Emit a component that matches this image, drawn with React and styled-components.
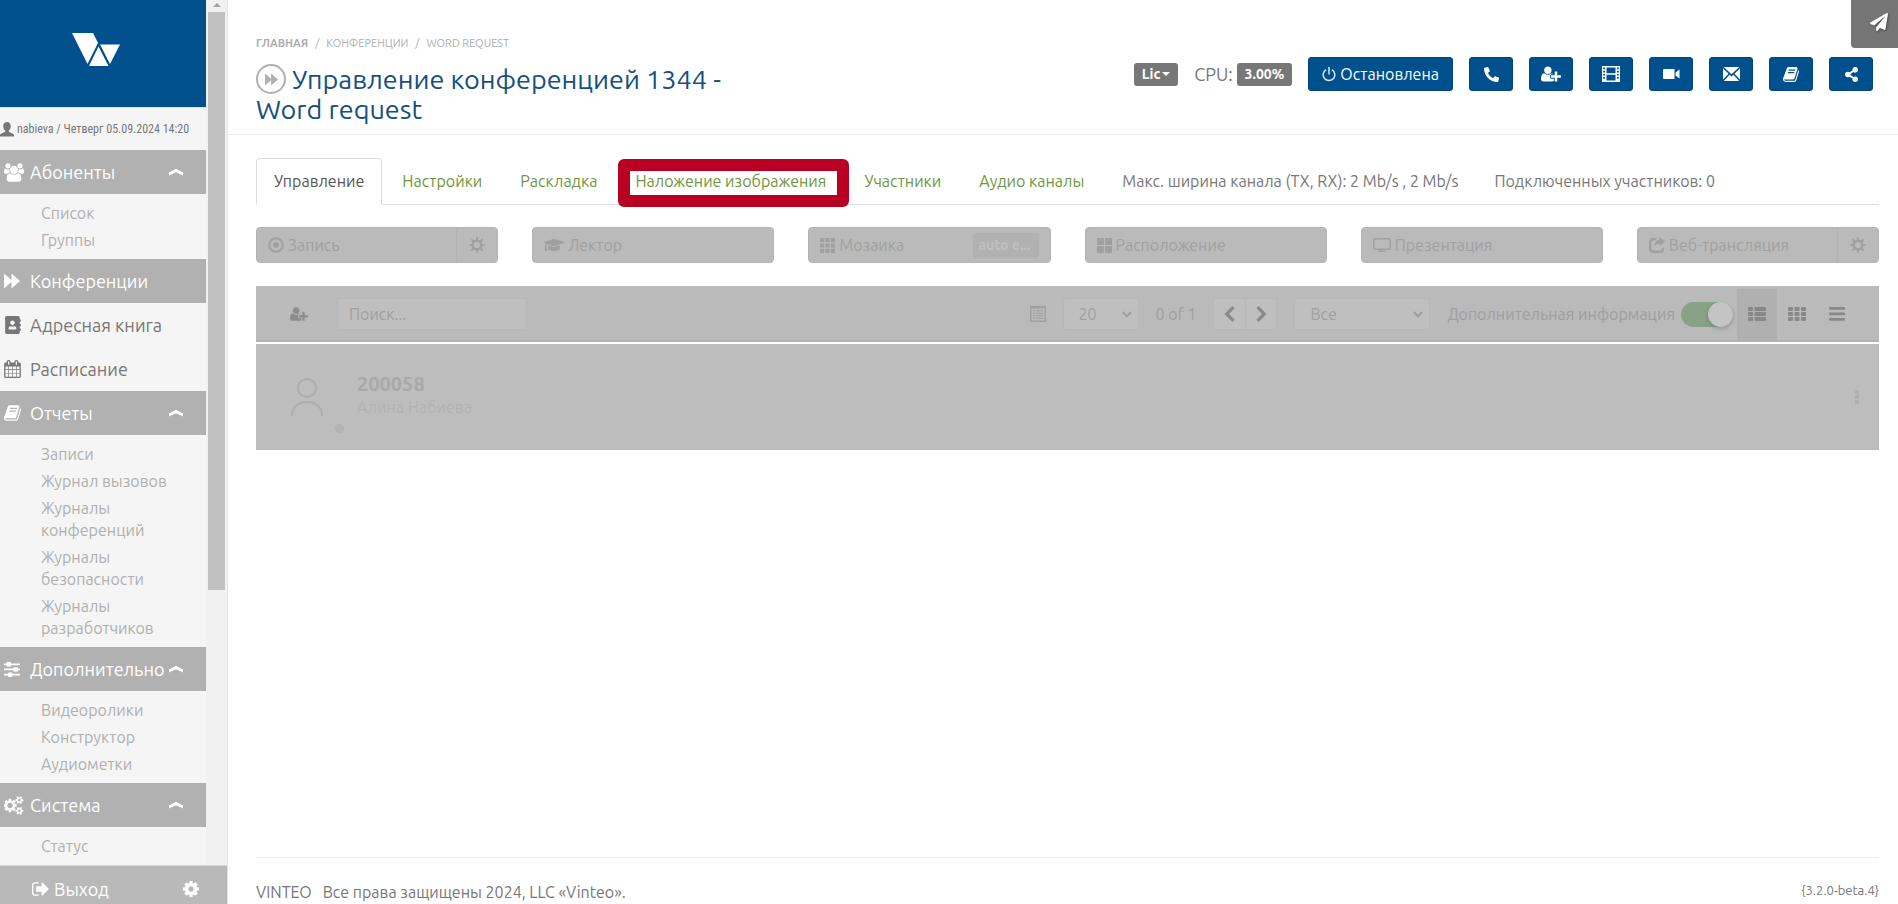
import { useState } from "react";
import styled, { createGlobalStyle } from "styled-components";
import { FaAddressBook, FaGraduationCap, FaPaperPlane, FaPhoneAlt, FaShareAlt } from "react-icons/fa";

const GlobalStyle = createGlobalStyle`
    *, *::before, *::after {
        box-sizing: border-box;
    }

    body {
        margin: 0;
        background: #fff;
        color: #777;
        font-family: "Ubuntu", "Noto Sans", sans-serif;
        font-size: 16px;
        line-height: 22px;
    }

    button, input, select {
        font: inherit;
        color: inherit;
    }

    a {
        color: inherit;
        text-decoration: none;
    }

    svg {
        display: block;
        flex: none;
    }
`;

/* ---------- icons ---------- */

const Svg = ({ box, w, h, children }) => (
    <svg viewBox={box} width={w} height={h} fill="currentColor" aria-hidden="true">{children}</svg>
);

const LogoMark = () => (
    <Svg box="0 0 48 34" w={48} h={34}>
        <path d="M0 0h21l5 10-10.500 21z" />
        <path d="M28 11.500h20L38 31z" />
        <path d="M26.500 13.500 36.500 33H17z" />
    </Svg>
);

const PersonIcon = () => (
    <Svg box="0 0 14 15" w={14} h={15}>
        <path d="M7 0c2.400 0 3.800 1.700 3.800 4.200 0 1.800-.8 3.300-1.900 4.300v1.300l4 1.900c.7.300 1.100.8 1.100 1.500V14.500H0v-1.300c0-.7.400-1.200 1.100-1.500l4-1.900V8.500C4 7.500 3.200 6 3.200 4.200 3.200 1.700 4.600 0 7 0z" />
    </Svg>
);

const UsersIcon = () => (
    <Svg box="0 0 1920 1792" w={20} h={19}>
        <path d="M593 896q-162 5-265 128h-134q-82 0-138-40.500t-56-118.500q0-353 124-353 6 0 43.500 21t97.500 42.500 119 21.500q67 0 133-23-5 37-5 66 0 139 81 256zm1071 637q0 120-73 189.500t-194 69.500h-874q-121 0-194-69.500t-73-189.500q0-53 3.500-103.500t14-109 26.500-108.500 43-97.500 62-81 85.500-53.500 111.500-20q10 0 43 21.500t73 48 107 48 135 21.500 135-21.500 107-48 73-48 43-21.500q61 0 111.500 20t85.500 53.500 62 81 43 97.500 26.500 108.500 14 109 3.500 103.500zm-1024-1277q0 106-75 181t-181 75-181-75-75-181 75-181 181-75 181 75 75 181zm704 384q0 159-112.500 271.500t-271.500 112.500-271.500-112.500-112.500-271.500 112.500-271.500 271.500-112.500 271.500 112.500 112.500 271.500zm576 225q0 78-56 118.500t-138 40.500h-134q-103-123-265-128 81-117 81-256 0-29-5-66 66 23 133 23 59 0 119-21.500t97.500-42.500 43.500-21q124 0 124 353zm-128-609q0 106-75 181t-181 75-181-75-75-181 75-181 181-75 181 75 75 181z" />
    </Svg>
);

const ForwardIcon = ({ size = 16 }) => (
    <Svg box="0 0 16 16" w={size} h={size}>
        <path d="M0 .5 7.500 7V.5L16 8l-8.500 7.500V9L0 15.500z" />
    </Svg>
);

const CalendarIcon = () => (
    <Svg box="64 0 1664 1792" w={17} h={18}>
        <path d="M192 1664h288v-288h-288v288zm352 0h320v-288h-320v288zm-352-352h288v-320h-288v320zm352 0h320v-320h-320v320zm-352-384h288v-288h-288v288zm736 736h320v-288h-320v288zm-384-736h320v-288h-320v288zm768 736h288v-288h-288v288zm-384-352h320v-320h-320v320zm-352-864v-288q0-13-9.500-22.500t-22.500-9.500h-64q-13 0-22.500 9.500t-9.500 22.500v288q0 13 9.500 22.500t22.500 9.500h64q13 0 22.500-9.500t9.500-22.500zm736 864h288v-320h-288v320zm-384-384h320v-288h-320v288zm384 0h288v-288h-288v288zm32-480v-288q0-13-9.500-22.500t-22.500-9.500h-64q-13 0-22.500 9.500t-9.500 22.500v288q0 13 9.500 22.500t22.500 9.500h64q13 0 22.500-9.500t9.500-22.500zm384-64v1280q0 52-38 90t-90 38h-1408q-52 0-90-38t-38-90v-1280q0-52 38-90t90-38h128v-96q0-66 47-113t113-47h64q66 0 113 47t47 113v96h384v-96q0-66 47-113t113-47h64q66 0 113 47t47 113v96h128q52 0 90 38t38 90z" />
    </Svg>
);

const BookIcon = ({ size = 17 }) => (
    <Svg box="64 128 1664 1536" w={size} h={size - 1}>
        <path d="M1703 478q40 57 18 129l-275 906q-19 64-76.500 107.500t-122.500 43.500h-923q-77 0-148.500-53.500t-99.500-131.500q-24-67-2-127 0-4 3-27t4-37q1-8-3-21.500t-3-19.500q2-11 8-21t16.500-23.500 16.500-23.500q23-38 45-91.500t30-91.500q3-10 .5-30t-.5-28q3-11 17-28t17-23q21-36 42-92t25-90q1-9-2.500-32t.5-28q4-13 22-30.500t22-22.500q19-26 42.500-84.500t27.500-96.500q1-8-3-25.500t-2-26.500q2-8 9-18t18-23 17-21q8-12 16.500-30.500t15-35 16-36 19.500-32 26.500-23.500 36-11.500 47.500 5.500l-1 3q38-9 51-9h761q74 0 114 56t18 130l-274 906q-36 119-71.500 153.500t-128.500 34.500h-869q-27 0-38 15-11 16-1 43 24 70 144 70h923q29 0 56-15.500t35-41.500l300-987q7-22 5-57 38 15 59 43zm-1064 2q-4 13 2 22.500t20 9.500h608q13 0 25.500-9.500t16.500-22.500l21-64q4-13-2-22.500t-20-9.500h-608q-13 0-25.500 9.500t-16.500 22.500zm-83 256q-4 13 2 22.500t20 9.500h608q13 0 25.500-9.500t16.500-22.500l21-64q4-13-2-22.500t-20-9.500h-608q-13 0-25.500 9.500t-16.500 22.500z" />
    </Svg>
);

const SlidersIcon = () => (
    <Svg box="0 0 16 15" w={16} h={15}>
        <path d="M0 1.500h16v1.700H0zM0 6.600h16v1.700H0zM0 11.700h16v1.700H0z" />
        <rect x="2.500" y="0" width="4.500" height="4.500" rx=".8" />
        <rect x="9.500" y="5.200" width="4.500" height="4.500" rx=".8" />
        <rect x="4" y="10.400" width="4.500" height="4.500" rx=".8" />
    </Svg>
);

const CogsIcon = () => (
    <Svg box="0 0 1920 1792" w={20} h={19}>
        <path d="M832 896q0-106-75-181t-181-75-181 75-75 181 75 181 181 75 181-75 75-181zm768 512q0-52-38-90t-90-38-90 38-38 90q0 53 37.500 90.500t90.500 37.500 90.500-37.500 37.500-90.500zm0-1024q0-52-38-90t-90-38-90 38-38 90q0 53 37.500 90.500t90.500 37.500 90.500-37.500 37.500-90.500zm-384 421v185q0 10-7 19.500t-16 10.500l-155 24q-11 35-32 76 34 48 90 115 7 11 7 20 0 12-7 19-23 30-82.500 89.500t-78.500 59.500q-11 0-21-7l-115-90q-37 19-77 31-11 108-23 155-7 24-30 24h-186q-11 0-20-7.500t-10-17.500l-23-153q-34-10-75-31l-118 89q-7 7-20 7-11 0-21-8-144-133-144-160 0-9 7-19 10-14 41-53t47-61q-23-44-35-82l-152-24q-10-1-17-9.500t-7-19.500v-185q0-10 7-19.500t16-10.500l155-24q11-35 32-76-34-48-90-115-7-11-7-20 0-12 7-20 22-30 82-89t79-59q11 0 21 7l115 90q34-18 77-32 11-108 23-154 7-24 30-24h186q11 0 20 7.500t10 17.500l23 153q34 10 75 31l118-89q8-7 20-7 11 0 21 8 144 133 144 160 0 8-7 19-12 16-42 54t-45 60q23 48 34 82l152 23q10 2 17 10.500t7 19.500zm640 533v140q0 16-149 31-12 27-30 52 51 113 51 138 0 4-4 7-122 71-124 71-8 0-46-47t-52-68q-20 2-30 2t-30-2q-14 21-52 68t-46 47q-2 0-124-71-4-3-4-7 0-25 51-138-18-25-30-52-149-15-149-31v-140q0-16 149-31 13-29 30-52-51-113-51-138 0-4 4-7 4-2 35-20t59-34 30-16q8 0 46 46.500t52 67.500q20-2 30-2t30 2q51-71 92-112l6-2q4 0 124 70 4 3 4 7 0 25-51 138 17 23 30 52 149 15 149 31zm0-1024v140q0 16-149 31-12 27-30 52 51 113 51 138 0 4-4 7-122 71-124 71-8 0-46-47t-52-68q-20 2-30 2t-30-2q-14 21-52 68t-46 47q-2 0-124-71-4-3-4-7 0-25 51-138-18-25-30-52-149-15-149-31v-140q0-16 149-31 13-29 30-52-51-113-51-138 0-4 4-7 4-2 35-20t59-34 30-16q8 0 46 46.500t52 67.500q20-2 30-2t30 2q51-71 92-112l6-2q4 0 124 70 4 3 4 7 0 25-51 138 17 23 30 52 149 15 149 31z" />
    </Svg>
);

const CogIcon = () => (
    <Svg box="128 128 1536 1536" w={16} h={16}>
        <path d="M1152 896q0-106-75-181t-181-75-181 75-75 181 75 181 181 75 181-75 75-181zm512-109v222q0 12-8 23t-20 13l-185 28q-19 54-39 91 35 50 107 138 10 12 10 25t-9 23q-27 37-99 108t-94 71q-12 0-26-9l-138-108q-44 23-91 38-16 136-29 186-7 28-36 28h-222q-14 0-24.500-8.500t-11.500-21.500l-28-184q-49-16-90-37l-141 107q-10 9-25 9-14 0-25-11-126-114-165-168-7-10-7-23 0-12 8-23 15-21 51-66.500t54-70.500q-27-50-41-99l-183-27q-13-2-21-12.500t-8-23.500v-222q0-12 8-23t19-13l186-28q14-46 39-92-40-57-107-138-10-12-10-24 0-10 9-23 26-36 98.500-107.500t94.500-71.500q13 0 26 10l138 107q44-23 91-38 16-136 29-186 7-28 36-28h222q14 0 24.500 8.500t11.500 21.500l28 184q49 16 90 37l142-107q9-9 24-9 13 0 25 10 129 119 165 170 7 8 7 22 0 12-8 23-15 21-51 66.500t-54 70.500q26 50 41 98l183 28q13 2 21 12.500t8 23.500z" />
    </Svg>
);

/* thinner gear with eight separate teeth */
const GearIcon = () => (
    <Svg box="0 0 16 16" w={16} h={16}>
        {[0, 45, 90, 135, 180, 225, 270, 315].map((a) => (
            <path key={a} d="M6.900 3.200 7.200 0h1.600l.3 3.200z" transform={`rotate(${a} 8 8)`} />
        ))}
        <circle cx="8" cy="8" r="4.300" fill="none" stroke="currentColor" strokeWidth="2.400" />
    </Svg>
);

const SignOutIcon = () => (
    <Svg box="64 256 1600 1280" w={17} h={14}>
        <path d="M704 1440q0 4 1 20t.5 26.500-3 23.500-10 19.500-20.500 6.500h-320q-119 0-203.500-84.500t-84.500-203.500v-704q0-119 84.500-203.500t203.500-84.500h320q13 0 22.500 9.500t9.500 22.500q0 4 1 20t.5 26.500-3 23.500-10 19.500-20.500 6.500h-320q-66 0-113 47t-47 113v704q0 66 47 113t113 47h312l11.500 1 11.500 3 8 5.500 7 9 2 13.500zm928-544q0 26-19 45l-544 544q-19 19-45 19t-45-19-19-45v-288h-448q-26 0-45-19t-19-45v-384q0-26 19-45t45-19h448v-288q0-26 19-45t45-19 45 19l544 544q19 19 19 45z" />
    </Svg>
);

const UserPlusIcon = ({ w = 19, h = 16 }) => (
    <Svg box="0 100 2048 1592" w={w} h={h}>
        <path d="M704 896q-159 0-271.500-112.500t-112.500-271.500 112.500-271.500 271.500-112.500 271.500 112.500 112.500 271.500-112.500 271.500-271.500 112.500zm960 128h352q13 0 22.500 9.500t9.500 22.500v192q0 13-9.500 22.500t-22.500 9.500h-352v352q0 13-9.500 22.500t-22.500 9.500h-192q-13 0-22.500-9.500t-9.500-22.500v-352h-352q-13 0-22.500-9.500t-9.500-22.500v-192q0-13 9.500-22.500t22.500-9.500h352v-352q0-13 9.500-22.500t22.500-9.500h192q13 0 22.500 9.500t9.500 22.500v352zm-736 224q0 52 38 90t90 38h256v238q-68 50-171 50h-874q-121 0-194-69t-73-190q0-53 3.500-103.500t14-109 26.500-108.500 43-97.500 62-81 85.500-53.500 111.500-20q19 0 39 17 79 61 154.500 91.500t164.500 30.500 164.500-30.500 154.500-91.500q20-17 39-17 132 0 217 96h-223q-52 0-90 38t-38 90v192z" />
    </Svg>
);

const CollapseIcon = () => (
    <Svg box="0 0 14 8" w={14} h={8}>
        <path d="M0 4.500 7 .8l7 3.700v3L7 4.300 0 7.500z" />
    </Svg>
);

const PowerIcon = () => (
    <svg viewBox="0 0 14 15" width="14" height="15" fill="none" stroke="currentColor" strokeWidth="1.500" opacity=".85" aria-hidden="true">
        <path d="M4.200 2.700a5.800 5.800 0 1 0 5.600 0M7 0v7.500" />
    </svg>
);

const FilmIcon = () => (
    <Svg box="0 0 18 16" w={18} h={16}>
        <path fillRule="evenodd" d="M0 0h18v16H0zM4.500 1.500v5.800h9V1.500zM4.500 8.700v5.800h9V8.700zM1.200 1.500v1.700h1.800V1.500zM1.200 4.700v1.700h1.800V4.700zM1.200 7.900v1.700h1.800V7.900zM1.200 11v1.700h1.800V11zM15 1.500v1.700h1.800V1.500zM15 4.700v1.700h1.800V4.700zM15 7.900v1.700h1.800V7.900zM15 11v1.700h1.800V11z" />
    </Svg>
);

const CameraIcon = () => (
    <Svg box="0 0 17 10" w={17} h={10}>
        <path d="M1 0h10.500v10H1a1 1 0 0 1-1-1V1a1 1 0 0 1 1-1zM12.500 3.600 16.500.5v9l-4-3.100z" />
    </Svg>
);

const EnvelopeIcon = () => (
    <Svg box="0 0 17 14" w={17} h={14}>
        <path d="M.8 0h15.400L8.500 7.300zM0 1.300l5.600 5.500L0 12.500zM17 1.300v11.200l-5.600-5.700zM6.600 7.800l1.900 1.800 1.900-1.800 5.800 6.200H.8z" />
    </Svg>
);

const RecordIcon = () => (
    <Svg box="0 0 16 16" w={16} h={16}>
        <circle cx="8" cy="8" r="6.800" fill="none" stroke="currentColor" strokeWidth="2" />
        <circle cx="8" cy="8" r="2.800" />
    </Svg>
);

const SquaresIcon = ({ count = 3, w = 15, h = 15 }) => {
    const gap = 1.2;
    const cw = (w - gap * (count - 1)) / count;
    const ch = (h - gap * (count - 1)) / count;
    const cells = [...Array(count * count).keys()];
    return (
        <Svg box={`0 0 ${w} ${h}`} w={w} h={h}>
            {cells.map((i) => (
                <rect key={i} x={(i % count) * (cw + gap)} y={Math.floor(i / count) * (ch + gap)} width={cw} height={ch} rx=".4" />
            ))}
        </Svg>
    );
};

const MonitorIcon = () => (
    <svg viewBox="0 0 18 14" width="18" height="14" fill="none" stroke="currentColor" strokeWidth="1.500" aria-hidden="true">
        <rect x=".75" y=".75" width="16.500" height="10.500" rx="1.200" />
        <path d="M5 13.200h8M9 11v2" />
    </svg>
);

const ShareSquareIcon = () => (
    <Svg box="0 0 16 16" w={16} h={16}>
        <path d="M8 1H4a4 4 0 0 0-4 4v7a4 4 0 0 0 4 4h7a4 4 0 0 0 4-4v-2l-2.400 2v0a1.600 1.600 0 0 1-1.600 1.600H4A1.600 1.600 0 0 1 2.400 12V5A1.600 1.600 0 0 1 4 3.400h2.500z" />
        <path d="M10.500 0 16 4.500 10.500 9V6.500C8 6.500 6.500 7.500 5.500 9.500c0-4 2-6.500 5-7z" />
    </Svg>
);

const ListSheetIcon = () => (
    <Svg box="0 0 16 16" w={16} h={16}>
        <path fillRule="evenodd" d="M0 0h16v16H0zM1.500 2.500v12h13v-12z" />
        <path d="M3 4.300h2v1H3zM6 4.300h7v1H6zM3 6.800h2v1H3zM6 6.800h7v1H6zM3 9.300h2v1H3zM6 9.300h7v1H6zM3 11.800h2v1H3zM6 11.800h7v1H6z" />
    </Svg>
);

const CaretIcon = () => (
    <svg viewBox="0 0 10 7" width="10" height="7" fill="none" stroke="currentColor" strokeWidth="2" aria-hidden="true">
        <path d="m.8 1 4.200 4.300L9.200 1" />
    </svg>
);

const ArrowIcon = ({ right }) => (
    <svg viewBox="0 0 11 16" width="11" height="16" fill="none" stroke="currentColor" strokeWidth="3.200" aria-hidden="true">
        <path d={right ? "m1.500 1.200 6.800 6.800-6.800 6.800" : "M9.500 1.200 2.700 8l6.800 6.800"} />
    </svg>
);

const ThListIcon = () => (
    <Svg box="0 0 18 14" w={18} h={14}>
        {[0, 5, 10].map((y) => (
            <g key={y}>
                <rect x="0" y={y} width="5" height="4" rx="1" />
                <rect x="6.500" y={y} width="11.500" height="4" rx="1" />
            </g>
        ))}
    </Svg>
);

const ThIcon = () => (
    <Svg box="0 0 18 14" w={18} h={14}>
        {[0, 5, 10].map((y) => [0, 6.5, 13].map((x) => (
            <rect key={`${x}-${y}`} x={x} y={y} width="5" height="4" rx="1" />
        )))}
    </Svg>
);

const BarsIcon = () => (
    <Svg box="0 0 16 14" w={16} h={14}>
        {[0, 5.5, 11].map((y) => <rect key={y} x="0" y={y} width="16" height="2.800" rx="1" />)}
    </Svg>
);

const AvatarIcon = () => (
    <svg viewBox="0 0 32 38" width="32" height="38" fill="none" stroke="currentColor" strokeWidth="2" aria-hidden="true">
        <circle cx="16" cy="10" r="9" />
        <path d="M1 38C1 29 7 24 16 24s15 5 15 14" />
    </svg>
);

/* ---------- sidebar ---------- */

const Sidebar = styled.aside`
    position: fixed;
    top: 0;
    bottom: 0;
    left: 0;
    z-index: 2;
    width: 228px;
    display: flex;
    flex-direction: column;
    background: #f1f1f1;
    border-right: 1px solid #e4e4e4;
`;

const SidebarBody = styled.div`
    flex: 1;
    min-height: 0;
    display: flex;
    overflow: hidden;
`;

const SidebarContent = styled.div`
    width: 206px;
    background: #f5f5f5;
`;

const ScrollTrack = styled.div`
    flex: 1;
    display: flex;
    flex-direction: column;
    align-items: center;
    padding: 3px 2px 0;
`;

const ScrollArrow = styled.div`
    border: 4px solid transparent;
    border-top: 0;
    border-bottom: 4px solid #a3a3a3;
`;

const ScrollThumb = styled.div`
    width: 100%;
    height: 67%;
    margin-top: 5px;
    background: #c1c1c1;
`;

const Logo = styled.a`
    height: 107px;
    padding: 33px 0 0 72px;
    display: block;
    background: #00508d;
    color: #fff;
`;

const UserLine = styled.div`
    height: 43px;
    display: flex;
    align-items: center;
    gap: 3px;
    border-top: 1px solid #d3e8f8;
    font-family: "Ubuntu Condensed", "Roboto Condensed", "Roboto", sans-serif;
    font-size: 12px;
    white-space: nowrap;
`;

const NavLink = styled.a`
    height: 44px;
    padding-left: 4px;
    display: flex;
    align-items: center;
    font-size: 18px;
    white-space: nowrap;
    color: ${({ $active }) => ($active ? "#fff" : "#777")};
    background: ${({ $active }) => ($active ? "#b1b1b1" : "transparent")};
`;

const NavIcon = styled.span`
    width: 26px;
`;

const NavLabel = styled.span`
    width: 139px;
`;

const SubMenu = styled.ul`
    list-style: none;
    margin: 0;
    padding: 8px 16px 8px 41px;
    display: flex;
    flex-direction: column;
    gap: 5px;
    color: #b0b0b0;
`;

const SidebarFooter = styled.div`
    height: 39px;
    padding: 8px 28px 0 32px;
    display: flex;
    align-items: center;
    justify-content: space-between;
    background: #b9b9b9;
    border-top: 1px solid #d8d8d8;
    color: #fff;
    font-size: 18px;
`;

const ExitLink = styled.a`
    display: flex;
    align-items: center;
    gap: 5px;
`;

const PlainButton = styled.button`
    padding: 0;
    border: 0;
    background: none;
    cursor: pointer;
`;

/* ---------- header ---------- */

const Page = styled.div`
    min-height: 100vh;
    margin-left: 228px;
    display: flex;
    flex-direction: column;
`;

const Header = styled.header`
    padding: 34px 25px 10px 28px;
    display: flex;
    justify-content: space-between;
    align-items: flex-start;
    border-bottom: 1px solid #eaeaea;
`;

const Heading = styled.div`
    width: 31%;
`;

const Breadcrumbs = styled.nav`
    display: flex;
    gap: 7px;
    font-size: 11px;
    line-height: 18px;
    text-transform: uppercase;
    color: #adadad;
`;

const Title = styled.h1`
    margin: 12px 0 0;
    font-size: 27px;
    font-weight: 400;
    line-height: 30px;
    color: #15507f;
`;

const TitleIcon = styled.span`
    width: 30px;
    height: 30px;
    margin-right: 6px;
    display: inline-flex;
    align-items: center;
    justify-content: center;
    vertical-align: bottom;
    border: 2px solid #b0b0b0;
    border-radius: 50%;
    color: #b0b0b0;
`;

const Actions = styled.div`
    margin-top: 23px;
    display: flex;
    align-items: center;
    gap: 16px;
`;

const Cpu = styled.span`
    display: flex;
    align-items: center;
    gap: 4px;
    font-size: 18px;
`;

const Badge = styled.span`
    height: 23px;
    padding: 0 8px;
    display: flex;
    align-items: center;
    gap: 2px;
    border: 0;
    border-radius: 3px;
    background: #777;
    color: #fff;
    font-size: 14px;
    font-weight: 700;
`;

const Caret = styled.span`
    border: 4px solid transparent;
    border-top-color: currentColor;
    border-bottom: 0;
`;

const ActionButton = styled.button`
    height: 34px;
    padding: 0 13px;
    display: flex;
    align-items: center;
    justify-content: center;
    gap: 4px;
    border: 1px solid #00467c;
    border-radius: 3px;
    background: #00508d;
    color: #fff;
    cursor: pointer;
`;

const IconAction = styled(ActionButton)`
    width: 44px;
    padding: 0;
`;

const FeedbackButton = styled.button`
    position: fixed;
    top: 0;
    right: 0;
    z-index: 3;
    width: 47px;
    height: 48px;
    padding: 0 0 5px 9px;
    display: flex;
    align-items: center;
    justify-content: center;
    border: 0;
    border-radius: 0 0 0 4px;
    background: #757575;
    color: #fff;

    svg {
        filter: drop-shadow(1px 1px 1px rgba(0, 0, 0, 0.4));
    }
`;

/* ---------- content ---------- */

const Content = styled.main`
    flex: 1;
    padding: 23px 19px 0 28px;
`;

const Tabs = styled.nav`
    height: 47px;
    display: flex;
    border-bottom: 1px solid #ddd;
    white-space: nowrap;
`;

const Tab = styled.a`
    position: relative;
    height: 47px;
    margin-right: 2px;
    padding: 0 17px 1px;
    display: flex;
    align-items: center;
    color: ${({ $active }) => ($active ? "#555" : "#6f9641")};
    border: 1px solid ${({ $active }) => ($active ? "#ddd" : "transparent")};
    border-bottom-color: ${({ $active }) => ($active ? "#fff" : "transparent")};
    border-radius: 4px 4px 0 0;
`;

const Marker = styled.span`
    position: absolute;
    inset: 0 -6px -3px 0;
    border: 12px solid #b90023;
    border-radius: 6px;
    pointer-events: none;
`;

const TabNote = styled.span`
    padding: 0 18px;
    display: flex;
    align-items: center;
`;

const Modes = styled.div`
    margin-top: 22px;
    display: grid;
    grid-template-columns: repeat(6, 1fr);
    gap: 34px;
`;

const Mode = styled.div`
    height: 36px;
    display: flex;
    border: 1px solid #b4b4b4;
    border-radius: 4px;
    background: #bababa;
    color: #a0a0a0;
`;

const ModeButton = styled.button`
    flex: 1;
    min-width: 0;
    padding: 0 11px;
    display: flex;
    align-items: center;
    gap: 4px;
    border: 0;
    background: none;
    text-align: left;
`;

const ModeSettings = styled.button`
    width: 41px;
    padding: 0;
    display: flex;
    align-items: center;
    justify-content: center;
    border: 0;
    border-left: 1px solid #b4b4b4;
    background: none;
`;

const ModeBadge = styled.span`
    width: 66px;
    height: 25px;
    margin-left: auto;
    padding: 0 6px;
    border-radius: 4px;
    background: #b1b1b1;
    color: #c0c0c0;
    font-size: 14px;
    font-weight: 700;
    line-height: 25px;
    white-space: nowrap;
`;

const Toolbar = styled.div`
    height: 56px;
    margin-top: 23px;
    padding: 2px 22px 0 34px;
    display: flex;
    align-items: center;
    background: #bababa;
    border-bottom: 2px solid #b2b2b2;
    color: #9f9f9f;
`;

const ToolButton = styled.button`
    padding: 0;
    border: 0;
    background: none;
    color: ${({ $light }) => ($light ? "#a0a0a0" : "#8c8c8c")};
`;

const SearchInput = styled.input`
    width: 190px;
    height: 32px;
    margin: 0 auto 0 29px;
    padding: 0 11px;
    border: 1px solid #b6b6b6;
    border-radius: 3px;
    background: #bfbfbf;

    &::placeholder {
        color: #a0a0a0;
        opacity: 1;
    }
`;

const SelectBox = styled.span`
    position: relative;
    margin: 0 17px;
    width: ${({ $wide }) => ($wide ? "136px" : "76px")};

    svg {
        position: absolute;
        top: 13px;
        right: 7px;
        pointer-events: none;
    }
`;

const Select = styled.select`
    display: block;
    width: 100%;
    height: 32px;
    padding: 0 15px;
    appearance: none;
    border: 1px solid #b6b6b6;
    border-radius: 3px;
    background: #bfbfbf;
`;

const Pager = styled.div`
    margin-left: 17px;
    display: flex;
    border: 1px solid #b6b6b6;
    border-radius: 3px;
    background: #bfbfbf;
    overflow: hidden;
`;

const PagerButton = styled.button`
    width: 31px;
    height: 30px;
    padding: 0;
    display: flex;
    align-items: center;
    justify-content: center;
    border: 0;
    background: none;
    color: #8a8a8a;

    & + & {
        border-left: 1px solid #b6b6b6;
    }
`;

const Switch = styled.input`
    width: 52px;
    height: 25px;
    margin: 0 4px 0 6px;
    appearance: none;
    border-radius: 13px;
    background: ${({ checked }) => (checked ? "#88a288" : "#adadad")};

    &::before {
        content: "";
        display: block;
        width: 25px;
        height: 25px;
        margin-left: ${({ checked }) => (checked ? "27px" : "0")};
        border-radius: 50%;
        background: #c4c4c4;
        box-shadow: 0 2px 4px rgba(0, 0, 0, 0.2);
    }
`;

const ViewButton = styled.button`
    width: 40px;
    height: 51px;
    padding: 0;
    display: flex;
    align-items: center;
    justify-content: center;
    border: 0;
    background: ${({ $active }) => ($active ? "#b0b0b0" : "none")};
    color: #888;
`;

const Participant = styled.div`
    height: 106px;
    margin-top: 2px;
    padding: 0 20px 0 35px;
    display: flex;
    align-items: center;
    background: #bdbdbd;
    border-bottom: 1px solid #b8b8b8;
    color: #adadad;
`;

const Status = styled.span`
    width: 9px;
    height: 9px;
    margin: 64px 13px 0 12px;
    border-radius: 50%;
    background: #b3b3b3;
`;

const Person = styled.div`
    flex: 1;
    padding-bottom: 3px;
    color: #b2b2b2;

    strong {
        display: block;
        font-size: 20px;
        line-height: 24px;
        color: #a8a8a8;
    }
`;

const MoreButton = styled.button`
    padding: 0;
    border: 0;
    background: none;
    color: #b0b0b0;
`;

const Footer = styled.footer`
    margin: 0 19px 0 28px;
    padding: 23px 0;
    height: 47px;
    display: flex;
    justify-content: space-between;
    border-top: 1px solid #eaeaea;

    b {
        margin-right: 11px;
        font-weight: 400;
    }
`;

const Version = styled.span`
    font-size: 13px;
    line-height: 18px;
`;

const menu = [
    { label: "Абоненты", icon: <UsersIcon />, active: true, items: ["Список", "Группы"] },
    { label: "Конференции", icon: <ForwardIcon />, active: true },
    { label: "Адресная книга", icon: <FaAddressBook size={18} /> },
    { label: "Расписание", icon: <CalendarIcon /> },
    {
        label: "Отчеты",
        icon: <BookIcon />,
        active: true,
        items: ["Записи", "Журнал вызовов", "Журналы конференций", "Журналы безопасности", "Журналы разработчиков"],
    },
    { label: "Дополнительно", icon: <SlidersIcon />, active: true, items: ["Видеоролики", "Конструктор", "Аудиометки"] },
    { label: "Система", icon: <CogsIcon />, active: true, items: ["Статус"] },
];

const actions = [
    { label: "Позвонить", icon: <FaPhoneAlt size={15} /> },
    { label: "Добавить участника", icon: <UserPlusIcon w={20} h={16} /> },
    { label: "Видеоролик", icon: <FilmIcon /> },
    { label: "Камера", icon: <CameraIcon /> },
    { label: "Сообщение", icon: <EnvelopeIcon /> },
    { label: "Журнал", icon: <BookIcon size={16} /> },
    { label: "Поделиться", icon: <FaShareAlt size={15} /> },
];

const modes = [
    { label: "Запись", icon: <RecordIcon />, settings: true },
    { label: "Лектор", icon: <FaGraduationCap size={20} /> },
    { label: "Мозаика", icon: <SquaresIcon />, badge: "auto e..." },
    { label: "Расположение", icon: <SquaresIcon count={2} /> },
    { label: "Презентация", icon: <MonitorIcon /> },
    { label: "Веб-трансляция", icon: <ShareSquareIcon />, settings: true },
];

const views = [
    { label: "Список", icon: <ThListIcon /> },
    { label: "Плитка", icon: <ThIcon /> },
    { label: "Строки", icon: <BarsIcon /> },
];

const App = () => {
    const [details, setDetails] = useState(true);
    const [view, setView] = useState("Список");

    return (
        <>
            <GlobalStyle />
            <Sidebar>
                <SidebarBody>
                    <SidebarContent>
                        <Logo href="#home" aria-label="Vinteo"><LogoMark /></Logo>
                        <UserLine><PersonIcon />nabieva / Четверг 05.09.2024 14:20</UserLine>
                        <nav>
                            {menu.map(({ label, icon, active, items }) => (
                                <div key={label}>
                                    <NavLink href="#menu" $active={active}>
                                        <NavIcon>{icon}</NavIcon>
                                        <NavLabel>{label}</NavLabel>
                                        {items && <CollapseIcon />}
                                    </NavLink>
                                    {items && (
                                        <SubMenu>
                                            {items.map((item) => <li key={item}><a href="#item">{item}</a></li>)}
                                        </SubMenu>
                                    )}
                                </div>
                            ))}
                        </nav>
                    </SidebarContent>
                    <ScrollTrack>
                        <ScrollArrow />
                        <ScrollThumb />
                    </ScrollTrack>
                </SidebarBody>
                <SidebarFooter>
                    <ExitLink href="#exit"><SignOutIcon />Выход</ExitLink>
                    <PlainButton aria-label="Параметры"><CogIcon /></PlainButton>
                </SidebarFooter>
            </Sidebar>

            <FeedbackButton aria-label="Обратная связь"><FaPaperPlane size={18} /></FeedbackButton>

            <Page>
                <Header>
                    <Heading>
                        <Breadcrumbs>
                            <a href="#home"><b>Главная</b></a>
                            <span>/</span>
                            <a href="#conferences">Конференции</a>
                            <span>/</span>
                            <span>Word request</span>
                        </Breadcrumbs>
                        <Title>
                            <TitleIcon><ForwardIcon size={13} /></TitleIcon>
                            Управление конференцией 1344 - Word request
                        </Title>
                    </Heading>
                    <Actions>
                        <Badge as="button">Lic<Caret /></Badge>
                        <Cpu>CPU: <Badge>3.00%</Badge></Cpu>
                        <ActionButton><PowerIcon />Остановлена</ActionButton>
                        {actions.map(({ label, icon }) => (
                            <IconAction key={label} aria-label={label}>{icon}</IconAction>
                        ))}
                    </Actions>
                </Header>

                <Content>
                    <Tabs>
                        <Tab href="#control" $active>Управление</Tab>
                        <Tab href="#settings">Настройки</Tab>
                        <Tab href="#layout">Раскладка</Tab>
                        <Tab href="#overlay">Наложение изображения<Marker /></Tab>
                        <Tab href="#members">Участники</Tab>
                        <Tab href="#audio">Аудио каналы</Tab>
                        <TabNote>Макс. ширина канала (TX, RX): 2 Mb/s , 2 Mb/s</TabNote>
                        <TabNote>Подключенных участников: 0</TabNote>
                    </Tabs>

                    <Modes>
                        {modes.map(({ label, icon, badge, settings }) => (
                            <Mode key={label}>
                                <ModeButton>
                                    {icon}
                                    {label}
                                    {badge && <ModeBadge>{badge}</ModeBadge>}
                                </ModeButton>
                                {settings && <ModeSettings aria-label="Настроить"><GearIcon /></ModeSettings>}
                            </Mode>
                        ))}
                    </Modes>

                    <Toolbar>
                        <ToolButton aria-label="Добавить"><UserPlusIcon w={18} h={14} /></ToolButton>
                        <SearchInput type="search" placeholder="Поиск..." aria-label="Поиск" />
                        <ToolButton $light aria-label="Выбрать"><ListSheetIcon /></ToolButton>
                        <SelectBox>
                            <Select aria-label="На странице">
                                <option>20</option>
                                <option>50</option>
                            </Select>
                            <CaretIcon />
                        </SelectBox>
                        <span>0 of 1</span>
                        <Pager>
                            <PagerButton aria-label="Назад"><ArrowIcon /></PagerButton>
                            <PagerButton aria-label="Вперед"><ArrowIcon right /></PagerButton>
                        </Pager>
                        <SelectBox $wide>
                            <Select aria-label="Фильтр">
                                <option>Все</option>
                                <option>Подключенные</option>
                            </Select>
                            <CaretIcon />
                        </SelectBox>
                        <label htmlFor="details">Дополнительная информация</label>
                        <Switch
                            id="details"
                            type="checkbox"
                            checked={details}
                            onChange={(e) => setDetails(e.target.checked)}
                        />
                        {views.map(({ label, icon }) => (
                            <ViewButton key={label} aria-label={label} $active={view === label} onClick={() => setView(label)}>
                                {icon}
                            </ViewButton>
                        ))}
                    </Toolbar>

                    <Participant>
                        <AvatarIcon />
                        <Status />
                        <Person>
                            <strong>200058</strong>
                            Алина Набиева
                        </Person>
                        <MoreButton aria-label="Действия">
                            <Svg box="0 0 4 14" w={4} h={14}>
                                <path d="M0 0h4v4H0zM0 5h4v4H0zM0 10h4v4H0z" />
                            </Svg>
                        </MoreButton>
                    </Participant>
                </Content>

                <Footer>
                    <span><b>VINTEO</b>Все права защищены 2024, LLC «Vinteo».</span>
                    <Version>{"{3.2.0-beta.4}"}</Version>
                </Footer>
            </Page>
        </>
    );
};

export default App;
